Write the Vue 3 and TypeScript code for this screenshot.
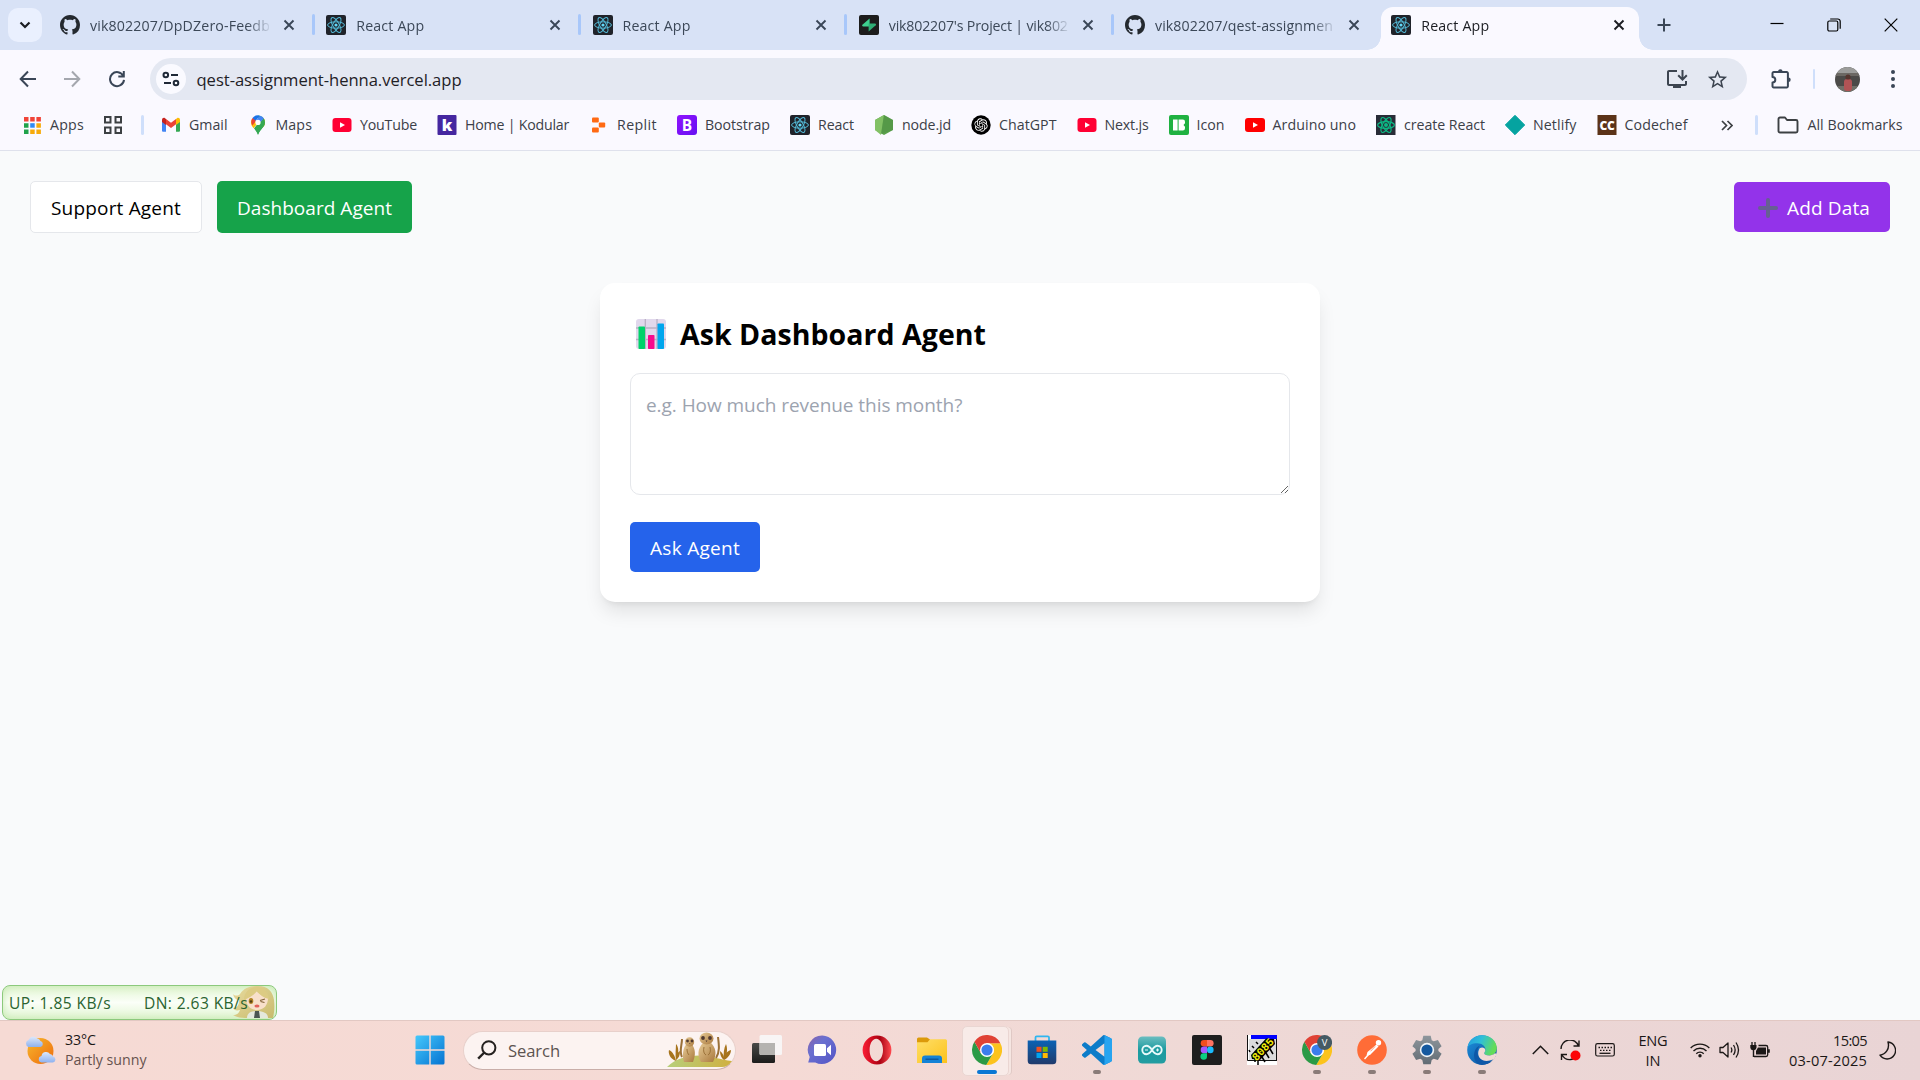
<script setup lang="ts">
import { ref, type Directive } from 'vue'

interface Tab { icon: string; title: string; width: number; active?: boolean }
interface Bookmark { icon: string; label: string; width: number; glyph?: string }
interface App { icon: string; running?: boolean; active?: boolean; glyph?: string }

// Tracks a label out or in so that it occupies the given width.
const vFit: Directive<HTMLElement, number> = {
  mounted(el, { value }) {
    const natural = el.getBoundingClientRect().width
    const count = (el.textContent ?? '').trim().length
    if (count > 0) el.style.letterSpacing = `${(value - natural) / count}px`
  },
}

const tabs: Tab[] = [
  { icon: 'github', title: 'vik802207/DpDZero-Feedb', width: 180 },
  { icon: 'react', title: 'React App', width: 68 },
  { icon: 'react', title: 'React App', width: 68 },
  { icon: 'supabase', title: "vik802207's Project | vik802", width: 179 },
  { icon: 'github', title: 'vik802207/qest-assignmen', width: 178 },
  { icon: 'react', title: 'React App', width: 68, active: true },
]

const bookmarks: Bookmark[] = [
  { icon: 'gmail', label: 'Gmail', width: 38.5 },
  { icon: 'maps', label: 'Maps', width: 36.5 },
  { icon: 'youtube', label: 'YouTube', width: 57 },
  { icon: 'kodular', label: 'Home | Kodular', width: 104, glyph: 'k' },
  { icon: 'replit', label: 'Replit', width: 40 },
  { icon: 'bootstrap', label: 'Bootstrap', width: 65, glyph: 'B' },
  { icon: 'react', label: 'React', width: 36 },
  { icon: 'node', label: 'node.jd', width: 49 },
  { icon: 'chatgpt', label: 'ChatGPT', width: 57.5 },
  { icon: 'youtube', label: 'Next.js', width: 44 },
  { icon: 'icons8', label: 'Icon', width: 28 },
  { icon: 'youtube2', label: 'Arduino uno', width: 83.5 },
  { icon: 'createreact', label: 'create React', width: 81 },
  { icon: 'netlify', label: 'Netlify', width: 43.5 },
  { icon: 'codechef', label: 'Codechef', width: 63, glyph: 'CC' },
]

const apps: App[] = [
  { icon: 'taskview' },
  { icon: 'chat' },
  { icon: 'opera' },
  { icon: 'explorer' },
  { icon: 'chrome', active: true },
  { icon: 'store' },
  { icon: 'vscode', running: true },
  { icon: 'arduino' },
  { icon: 'figma' },
  { icon: 'sim', glyph: '8085' },
  { icon: 'chromev', running: true, glyph: 'V' },
  { icon: 'postman', running: true },
  { icon: 'settings', running: true },
  { icon: 'edge', running: true },
]

const question = ref('')
</script>

<template>
  <div class="screen">
    <svg class="sprite" width="0" height="0" aria-hidden="true">
      <defs>
        <linearGradient id="g-win" x1="0" y1="0" x2="1" y2="1"><stop offset="0" stop-color="#45c8fb" /><stop offset="1" stop-color="#0573d2" /></linearGradient>
        <linearGradient id="g-sun" x1="0" y1="0" x2="1" y2="1"><stop offset="0" stop-color="#f7b92e" /><stop offset="1" stop-color="#ee6a0c" /></linearGradient>
        <linearGradient id="g-cloud" x1="0" y1="0" x2="0" y2="1"><stop offset="0" stop-color="#dbe7fb" /><stop offset="1" stop-color="#8eb2f0" /></linearGradient>
        <linearGradient id="g-chat" x1="0" y1="0" x2="1" y2="1"><stop offset="0" stop-color="#8a62a8" /><stop offset=".35" stop-color="#6a70d0" /><stop offset="1" stop-color="#5454c6" /></linearGradient>
        <linearGradient id="g-opera" x1="0" y1="0" x2="1" y2="0"><stop offset="0" stop-color="#fa1e35" /><stop offset=".45" stop-color="#c00618" /><stop offset=".6" stop-color="#a90313" /><stop offset="1" stop-color="#ff4a50" /></linearGradient>
        <linearGradient id="g-folder" x1="0" y1="0" x2="1" y2="1"><stop offset="0" stop-color="#ffdf68" /><stop offset="1" stop-color="#fcc21b" /></linearGradient>
        <linearGradient id="g-store" x1="0" y1="0" x2="0" y2="1"><stop offset="0" stop-color="#0b62b4" /><stop offset="1" stop-color="#203a6b" /></linearGradient>
        <linearGradient id="g-ard" x1="0" y1="0" x2="0" y2="1"><stop offset="0" stop-color="#6bbdc0" /><stop offset=".5" stop-color="#1b9ba0" /><stop offset="1" stop-color="#239da1" /></linearGradient>
        <linearGradient id="g-edge" x1="0" y1="0" x2="1" y2=".3"><stop offset="0" stop-color="#2299e0" /><stop offset=".5" stop-color="#2fbfd8" /><stop offset="1" stop-color="#63dc58" /></linearGradient>
        <linearGradient id="g-edge2" x1="0" y1="0" x2="1" y2="1"><stop offset="0" stop-color="#1d92e0" /><stop offset="1" stop-color="#0c4a94" /></linearGradient>
        <linearGradient id="g-dark" x1="0" y1="0" x2="0" y2="1"><stop offset="0" stop-color="#4a4a48" /><stop offset="1" stop-color="#1c1c1b" /></linearGradient>
        <linearGradient id="g-boot" x1="0" y1="0" x2="1" y2="1"><stop offset="0" stop-color="#9013fe" /><stop offset="1" stop-color="#6610f2" /></linearGradient>
        <linearGradient id="g-gear" x1="0" y1="0" x2="0" y2="1"><stop offset="0" stop-color="#8e969c" /><stop offset="1" stop-color="#626c74" /></linearGradient>
        <linearGradient id="g-fur" x1="0" y1="0" x2="1" y2="1"><stop offset="0" stop-color="#e8cd98" /><stop offset="1" stop-color="#a9783d" /></linearGradient>
        <linearGradient id="g-hill" x1="0" y1="0" x2="1" y2="0"><stop offset="0" stop-color="#b7cf7c" /><stop offset="1" stop-color="#d0b040" /></linearGradient>
        <linearGradient id="g-hair" x1="0" y1="0" x2="1" y2="1"><stop offset="0" stop-color="#e6d695" /><stop offset="1" stop-color="#c6b462" /></linearGradient>
      </defs>

      <symbol id="i-github" viewBox="0 0 16 16"><path fill="#24292f" d="M8 0C3.58 0 0 3.58 0 8c0 3.54 2.29 6.53 5.47 7.59.4.07.55-.17.55-.38 0-.19-.01-.82-.01-1.49-2.01.37-2.53-.49-2.69-.94-.09-.23-.48-.94-.82-1.13-.28-.15-.68-.52-.01-.53.63-.01 1.08.58 1.23.82.72 1.21 1.87.87 2.33.66.07-.52.28-.87.51-1.07-1.78-.2-3.64-.89-3.64-3.95 0-.87.31-1.59.82-2.15-.08-.2-.36-1.02.08-2.12 0 0 .67-.21 2.2.82.64-.18 1.32-.27 2-.27.68 0 1.36.09 2 .27 1.53-1.04 2.2-.82 2.2-.82.44 1.1.16 1.92.08 2.12.51.56.82 1.27.82 2.15 0 3.07-1.87 3.75-3.65 3.95.29.25.54.73.54 1.48 0 1.07-.01 1.93-.01 2.2 0 .21.15.46.55.38A8.01 8.01 0 0 0 16 8c0-4.42-3.58-8-8-8z" /></symbol>
      <symbol id="i-react" viewBox="0 0 20 20"><rect width="20" height="20" rx="2" fill="#20232a" /><g fill="none" stroke="#53b9d6" stroke-width="1"><ellipse cx="10" cy="10" rx="8.4" ry="3.2" /><ellipse cx="10" cy="10" rx="8.4" ry="3.2" transform="rotate(60 10 10)" /><ellipse cx="10" cy="10" rx="8.4" ry="3.2" transform="rotate(120 10 10)" /></g><circle cx="10" cy="10" r="1.6" fill="#61dafb" /></symbol>
      <symbol id="i-createreact" viewBox="0 0 20 20"><rect width="19.5" height="20" fill="#282c37" /><g fill="none" stroke="#0cb884" stroke-width="1.2"><ellipse cx="10" cy="10" rx="8.4" ry="3.4" /><ellipse cx="10" cy="10" rx="8.4" ry="3.4" transform="rotate(60 10 10)" /><ellipse cx="10" cy="10" rx="8.4" ry="3.4" transform="rotate(120 10 10)" /></g><circle cx="10" cy="10" r="2" fill="#0cb884" /></symbol>
      <symbol id="i-supabase" viewBox="0 0 20 20"><rect width="20" height="20" rx="2" fill="#1c1c1c" /><path d="M10.6 3.4v8H4.2c-1 0-1.4-1-.8-1.7z" fill="#3ecf8e" /><path d="M9.6 16.5v-8h6.3c1 0 1.5 1 .8 1.7z" fill="#2fae76" /></symbol>

      <symbol id="i-gmail" viewBox="0 0 20 20"><path d="M1 5v10.5c0 .8.5 1.3 1.3 1.3H5V8z" fill="#4285f4" /><path d="M19 5v10.5c0 .8-.5 1.3-1.3 1.3H15V8z" fill="#34a853" /><path d="M5 3.9v5.4l5 3.7 5-3.7V3.9l-5 3.8z" fill="#ea4335" /><path d="M1 5v2l4 3V3.9l-1-.7C2.7 2.3 1 3.2 1 5z" fill="#c5221f" /><path d="M19 5v2l-4 3V3.9l1-.7c1.300-.9 3 0 3 1.800z" fill="#fbbc04" /></symbol>
      <symbol id="i-maps" viewBox="0 0 20 20"><path d="M10 .4a7 7 0 0 1 7 7c0 4.600-4.800 6-7 12.400-1-3-2.500-4.700-4-6.600L10.500 8z" fill="#34a853" /><path d="M3.700 4.500 10 7.400l-5.500 4.300C3.300 10.200 3 8.800 3 7.400c0-1 .2-2 .7-2.900z" fill="#fbbc04" /><path d="M4.400 11.500 15.500 3A7 7 0 0 1 17 7.400c0 2-.9 3.500-2.200 5L10 8l-4.500 5.200z" fill="#fbbc04" /><path d="M17 7.400c0 4.600-4.800 6-7 12.400-.9-2.700-2.200-4.400-3.500-6L15.500 3.200A7 7 0 0 1 17 7.400z" fill="#34a853" /><path d="M4.500 3.100A7 7 0 0 1 12 .7L6.300 7.200z" fill="#1a73e8" /><path d="M12 .7a7 7 0 0 1 3.900 2.900L12.500 7 8 5.200z" fill="#4285f4" /><path d="M4.500 3.100 8 6 4.300 10.500A7 7 0 0 1 4.500 3.100z" fill="#ea4335" /><circle cx="10" cy="7.400" r="2.600" fill="#fff" /></symbol>
      <symbol id="i-youtube" viewBox="0 0 20 20"><rect x=".5" y="3" width="19" height="14" rx="3" fill="#ff0033" /><path d="M8 7.200v5.600l5-2.800z" fill="#fff" /></symbol>
      <symbol id="i-youtube2" viewBox="0 0 20 20"><rect y="3" width="20" height="14" rx="3" fill="#ff0000" /><path d="M8 7.200v5.600l5-2.800z" fill="#fff" /></symbol>
      <symbol id="i-kodular" viewBox="0 0 20 20"><rect x=".5" width="19" height="20" rx="1" fill="#4527a0" /></symbol>
      <symbol id="i-replit" viewBox="0 0 20 20"><g fill="#ff6a13"><rect x="3" y="2.500" width="6.800" height="5" rx="1" /><rect x="9.800" y="7.500" width="6.400" height="5" rx="1" /><rect x="3" y="12.500" width="6.800" height="5" rx="1" /></g></symbol>
      <symbol id="i-bootstrap" viewBox="0 0 20 20"><rect width="20" height="20" rx="3" fill="url(#g-boot)" /></symbol>
      <symbol id="i-node" viewBox="0 0 20 20"><path d="M10 0l9 5v10l-9 5-9-5V5z" fill="#5ba24b" /><path d="M10 0 7 20 1 15V5z" fill="#82c165" /><path d="M10 0l9 5v10l-12 4z" fill="#4f8f45" opacity=".5" /></symbol>
      <symbol id="i-chatgpt" viewBox="0 0 20 20"><circle cx="10" cy="10" r="9.700" fill="#000" /><path transform="translate(3.300 3.300) scale(.56)" fill="#fff" d="M22.2819 9.8211a5.9847 5.9847 0 0 0-.5157-4.9108 6.0462 6.0462 0 0 0-6.5098-2.9A6.0651 6.0651 0 0 0 4.9807 4.1818a5.9847 5.9847 0 0 0-3.9977 2.9 6.0462 6.0462 0 0 0 .7427 7.0966 5.98 5.98 0 0 0 .511 4.9107 6.051 6.051 0 0 0 6.5146 2.9001A5.9847 5.9847 0 0 0 13.2599 24a6.0557 6.0557 0 0 0 5.7718-4.2058 5.9894 5.9894 0 0 0 3.9977-2.9001 6.0557 6.0557 0 0 0-.7475-7.0729zm-9.022 12.6081a4.4755 4.4755 0 0 1-2.8764-1.0408l.1419-.0804 4.7783-2.7582a.7948.7948 0 0 0 .3927-.6813v-6.7369l2.02 1.1686a.071.071 0 0 1 .038.052v5.5826a4.504 4.504 0 0 1-4.4945 4.4944zm-9.6607-4.1254a4.4708 4.4708 0 0 1-.5346-3.0137l.142.0852 4.783 2.7582a.7712.7712 0 0 0 .7806 0l5.8428-3.3685v2.3324a.0804.0804 0 0 1-.0332.0615L9.74 19.9502a4.4992 4.4992 0 0 1-6.1408-1.6464zM2.3408 7.8956a4.485 4.485 0 0 1 2.3655-1.9728V11.6a.7664.7664 0 0 0 .3879.6765l5.8144 3.3543-2.0201 1.1685a.0757.0757 0 0 1-.071 0l-4.8303-2.7865A4.504 4.504 0 0 1 2.3408 7.872zm16.5963 3.8558L13.1038 8.364 15.1192 7.2a.0757.0757 0 0 1 .071 0l4.8303 2.7913a4.4944 4.4944 0 0 1-.6765 8.1042v-5.6772a.79.79 0 0 0-.407-.667zm2.0107-3.0231l-.142-.0852-4.7735-2.7818a.7759.7759 0 0 0-.7854 0L9.409 9.2297V6.8974a.0662.0662 0 0 1 .0284-.0615l4.8303-2.7866a4.4992 4.4992 0 0 1 6.6802 4.66zM8.3065 12.863l-2.02-1.1638a.0804.0804 0 0 1-.038-.0567V6.0742a4.4992 4.4992 0 0 1 7.3757-3.4537l-.142.0805L8.704 5.459a.7948.7948 0 0 0-.3927.6813zm1.0976-2.3654l2.602-1.4998 2.6069 1.4998v2.9994l-2.5974 1.4997-2.6067-1.4997Z" /></symbol>
      <symbol id="i-icons8" viewBox="0 0 20 20"><rect width="20" height="20" rx="2" fill="#1fb141" /><rect x="4" y="4.500" width="4.600" height="11" fill="#fff" /><path d="M9.600 4.500h4.200a2.200 2.200 0 0 1 2.200 2.200v1.600L14.500 10l1.500 1.700v1.600a2.200 2.200 0 0 1-2.200 2.200H9.600z" fill="#fff" /></symbol>
      <symbol id="i-netlify" viewBox="0 0 20 20"><path d="M10 .300 19.700 10 10 19.700.3 10z" fill="#05a3a0" stroke="#05a3a0" stroke-linejoin="round" /></symbol>
      <symbol id="i-codechef" viewBox="0 0 20 20"><rect x=".5" width="19" height="20" fill="#5b3318" /></symbol>

      <symbol id="i-taskview" viewBox="0 0 30 30"><rect x="0" y="8" width="23" height="20" rx="1.500" fill="url(#g-dark)" /><rect x="7.500" y="0" width="22.500" height="20" rx="1.500" fill="#f7f7f7" opacity=".92" /><path d="M7.500 8H23v12H9a1.500 1.500 0 0 1-1.500-1.500z" fill="#b5b3b0" /></symbol>
      <symbol id="i-chat" viewBox="0 0 30 30"><path d="M15.300.5a14.300 14.300 0 1 1-7 27H1.200l1.500-5.600A14.300 14.300 0 0 1 15.300.5z" fill="url(#g-chat)" /><rect x="7" y="9" width="12" height="12" rx="1.500" fill="#fff" /><path d="M20 13.200l4-3.400v10.400l-4-3.400z" fill="#fff" /></symbol>
      <symbol id="i-opera" viewBox="0 0 30 30"><path fill-rule="evenodd" fill="url(#g-opera)" d="M15 .6a14.400 14.400 0 1 0 0 28.800 14.400 14.400 0 0 0 0-28.800zM14.200 3.800c3.900 0 6.800 5 6.800 11.200s-2.900 11.200-6.800 11.200S7.600 21.200 7.600 15s2.700-11.200 6.600-11.200z" /></symbol>
      <symbol id="i-explorer" viewBox="0 0 30 30"><path d="M0 4a1.500 1.500 0 0 1 1.500-1.500H10L13 4.600V10H0z" fill="#dc9a0a" /><path d="M0 7.200h10.500L13 4.200h15.500A1.500 1.500 0 0 1 30 5.700V28H0z" fill="url(#g-folder)" /><path d="M5 28v-4.500a3 3 0 0 1 3-3h14a3 3 0 0 1 3 3V28z" fill="#1482d6" /><path d="M8.500 24.200h13" stroke="#0a4f94" stroke-width="1.200" /></symbol>
      <symbol id="i-chrome" viewBox="2 2 44 44"><path d="M24 14H43.600A22 22 0 0 1 22.860 45.970L32.660 29A10 10 0 0 0 24 14Z" fill="#fcc31c" /><path d="M32.660 29 22.860 45.970A22 22 0 0 1 5.540 12.030L15.340 29Z" fill="#2b9a46" /><path d="M5.540 12.030A22 22 0 0 1 43.600 14H24L15.340 29Z" fill="#e04235" /><circle cx="24" cy="24" r="10.300" fill="#fff" /><circle cx="24" cy="24" r="8.200" fill="#3b7ded" /></symbol>
      <symbol id="i-chromev" viewBox="0 0 30 30"><svg width="30" height="30" viewBox="2 2 44 44"><path d="M24 14H43.600A22 22 0 0 1 22.860 45.970L32.660 29A10 10 0 0 0 24 14Z" fill="#fcc31c" /><path d="M32.660 29 22.860 45.970A22 22 0 0 1 5.540 12.030L15.340 29Z" fill="#2b9a46" /><path d="M5.540 12.030A22 22 0 0 1 43.600 14H24L15.340 29Z" fill="#e04235" /><circle cx="24" cy="24" r="10.300" fill="#fff" /><circle cx="24" cy="24" r="8.200" fill="#3b7ded" /></svg><circle cx="22.600" cy="7.500" r="7.500" fill="#455a64" /></symbol>
      <symbol id="i-store" viewBox="0 0 30 30"><path d="M8.500 6V2.500A1.200 1.200 0 0 1 9.700 1.300h11.100A1.200 1.200 0 0 1 22 2.500V6" fill="none" stroke="#30b6f0" stroke-width="1.800" /><path d="M.7 5.500h28.600v20.300a3.500 3.500 0 0 1-3.500 3.500H4.200a3.500 3.500 0 0 1-3.500-3.500z" fill="url(#g-store)" /><path fill="#f2501f" d="M9.500 11.800h5v5h-5z" /><path fill="#80ba01" d="M15.700 11.800h5v5h-5z" /><path fill="#02a4ef" d="M9.500 18h5v5h-5z" /><path fill="#ffb902" d="M15.700 18h5v5h-5z" /></symbol>
      <symbol id="i-vscode" viewBox="0 0 24 24"><path fill="#0c7cc9" d="M23.150 2.587L18.210.210a1.494 1.494 0 0 0-1.705.290l-9.460 8.630-4.120-3.128a.999.999 0 0 0-1.276.057L.327 7.261A1 1 0 0 0 .326 8.740L3.899 12 .326 15.260a1 1 0 0 0 .001 1.479L1.650 17.940a.999.999 0 0 0 1.276.057l4.120-3.128 9.460 8.630a1.492 1.492 0 0 0 1.704.290l4.942-2.377A1.500 1.500 0 0 0 24 20.060V3.939a1.500 1.500 0 0 0-.850-1.352zm-5.146 14.861L10.826 12l7.178-5.448v10.896z" /><path d="M18 .15l5.150 2.437A1.500 1.500 0 0 1 24 3.940v16.120a1.500 1.500 0 0 1-.85 1.350L18.200 23.800a1.500 1.500 0 0 1-1.700-.3c.6.300 1.500 0 1.500-.9z" fill="#27a4f0" /></symbol>
      <symbol id="i-arduino" viewBox="0 0 30 30"><rect x="1" y="1.500" width="28" height="27" rx="4.500" fill="url(#g-ard)" /><g fill="none" stroke="#e8fafa" stroke-width="1.900"><path d="M15 15c-2-3-3.500-4.200-5.500-4.200a4.200 4.200 0 0 0 0 8.400c2 0 3.500-1.200 5.500-4.200s3.500-4.200 5.500-4.200a4.200 4.200 0 0 1 0 8.400c-2 0-3.500-1.200-5.500-4.200z" /><path d="M8 15h3M19 15h3M20.500 13.500v3" stroke-width="1.100" /></g></symbol>
      <symbol id="i-figma" viewBox="0 0 30 30"><rect width="30" height="30" rx="2" fill="#1e1e1e" /><path d="M15 5h-3a3.300 3.300 0 0 0 0 6.600h3z" fill="#f24e1e" /><path d="M15 5h3.300a3.300 3.300 0 0 1 0 6.600H15z" fill="#ff7262" /><path d="M15 11.600h-3a3.300 3.300 0 0 0 0 6.600h3z" fill="#a259ff" /><circle cx="18.300" cy="14.900" r="3.300" fill="#1abcfe" /><path d="M12 18.200h3v3.300a3.300 3.300 0 1 1-3-3.300z" fill="#0acf83" /></symbol>
      <symbol id="i-sim" viewBox="0 0 30 30"><rect width="30" height="30" fill="#fff" /><path d="M2 4h28v21H2z" fill="#dcdcdc" /><path d="M.5 0v25.500H30M29.500 0v26" stroke="#111" fill="none" /><path d="M4 0h26v4H4z" fill="#00f" /><path d="M4 20 19 3.500l8 .5 1 5-15 16-8-1z" fill="#000" /><path d="M8 23v4M11 24v6M15 22l3 5M19 18l3 5M23 14l3 5M3 17l-1-2M7 13l-2-2M11 9 9 7" stroke="#000" stroke-width="1.500" /></symbol>
      <symbol id="i-postman" viewBox="0 0 30 30"><circle cx="15" cy="15" r="14.800" fill="#ff6c37" /><circle cx="21.500" cy="7.800" r="2.700" fill="#fff" /><path d="M19.500 9.500 21.500 11.500 13 20 9.500 20.500 10.500 17z" fill="#fff" /><path d="M12 19 7.500 24" stroke="#fff" stroke-width="1.400" /><path d="M18 11.500l-4.500 4.800" stroke="#ff6c37" stroke-width=".7" /></symbol>
      <symbol id="i-settings" viewBox="0 0 30 30"><path fill="url(#g-gear)" d="M11.300.8h7.400l1 4.400 2 1.100 4.200-1.300 3.700 6.300-3.200 2.700v2l3.200 2.800-3.700 6.300-4.200-1.400-2 1.200-1 4.400h-7.400l-1-4.400-2-1.200-4.200 1.400L.4 18.800 3.600 16v-2L.4 11.300 4.100 5l4.200 1.300 2-1.100z" /><circle cx="15" cy="15" r="7.200" fill="#f2f6f9" /><circle cx="15" cy="15" r="5.600" fill="#14599f" /></symbol>
      <symbol id="i-edge" viewBox="0 0 30 30"><circle cx="15" cy="15" r="14.800" fill="url(#g-edge2)" /><path d="M.4 13C1.500 5.300 7.500.2 15 .2c8.600 0 14.800 6 14.800 12.800 0 4.500-3.300 7.400-7.500 7.400-3.600 0-5.100-1.300-5.100-2.200 0-.7 1.200-1.300 1.200-3.600 0-3.500-3.400-6.400-8.200-6.400C5 8.200 1 10.300.4 13z" fill="url(#g-edge)" /><path d="M18.300 15c0 2-1.100 2.500-1.100 3.200 0 .9 1.500 2.200 5.100 2.200 2.200 0 4.200-.8 5.600-2.200l1.700.5c-.8 3-2.500 5.600-4.800 7.500-3 .9-6.500.9-9.500-.8-4.300-2.400-5.300-8-2.600-12.200 2-1.500 5.600-.9 5.600 1.800z" fill="#f0dad5" /><path d="M13 10.500c-3 3-3.500 8.500-.5 12.500 3.500 4 9.500 3.500 13.500 1.300-2.700 3.900-7.300 5.600-11 5.600C8 29.800 6 22 7.500 17c.8-3.500 3-5.500 5.500-6.500z" fill="#0e58a8" /></symbol>
    </svg>

    <header class="browser">
      <div class="tabstrip">
        <button class="tab-search"><svg width="12" height="8" viewBox="0 0 12 8"><path d="M1.500 1.500 6 6l4.500-4.500" fill="none" stroke="#1b1d22" stroke-width="2.200" /></svg></button>
        <div v-for="(tab, i) in tabs" :key="i" class="tab" :class="{ active: tab.active, last: i === 4 }">
          <svg class="fav"><use :href="`#i-${tab.icon}`" /></svg>
          <div class="tab-title"><span v-fit="tab.width">{{ tab.title }}</span></div>
          <svg class="close" width="12" height="12" viewBox="0 0 12 12"><path d="M1.500 1.500l9 9M10.500 1.500l-9 9" :stroke="tab.active ? '#1b1d22' : '#3a4657'" stroke-width="1.900" /></svg>
        </div>
        <svg class="newtab" width="14" height="14" viewBox="0 0 14 14"><path d="M7 .5v13M.5 7h13" stroke="#3a4657" stroke-width="2" /></svg>
        <div class="winctl">
          <svg width="14" height="14" viewBox="0 0 14 14"><path d="M.5 5.500h13" stroke="#000" stroke-width="1.200" /></svg>
          <svg width="14" height="14" viewBox="0 0 14 14" fill="none" stroke="#000" stroke-width="1.200"><rect x=".8" y="3" width="10" height="10" rx="1.500" /><path d="M3.200 1h7.600a2.400 2.400 0 0 1 2.400 2.400v7.400" /></svg>
          <svg width="14" height="14" viewBox="0 0 14 14"><path d="M.7.7l12.600 12.600M13.300.7.7 13.300" stroke="#000" stroke-width="1.200" /></svg>
        </div>
      </div>

      <div class="toolbar">
        <svg class="nav" width="18" height="18" viewBox="0 0 18 18"><path d="M17 9H2M9 1.500 1.700 9 9 16.500" fill="none" stroke="#3a4657" stroke-width="2" /></svg>
        <svg class="nav fwd" width="18" height="18" viewBox="0 0 18 18"><path d="M1 9h15M9 1.500 16.300 9 9 16.500" fill="none" stroke="#a4a7ae" stroke-width="2" /></svg>
        <svg class="nav rel" width="18" height="18" viewBox="0 0 18 18"><path d="M15.300 6A7 7 0 1 0 16 9.800M15.800 1v5.500h-5.500" fill="none" stroke="#3a4657" stroke-width="2" /></svg>
        <div class="omnibox">
          <span class="siteinfo"><svg width="18" height="16" viewBox="0 0 18 16" fill="none" stroke="#1f2937" stroke-width="2"><circle cx="3.800" cy="4" r="2.300" /><path d="M9 4h7M2 12h7" /><circle cx="14" cy="12" r="2.300" /></svg></span>
          <span class="url"><span v-fit="265">qest-assignment-henna.vercel.app</span></span>
          <svg class="install" width="24" height="24" viewBox="0 0 24 24" fill="#3c4450"><path d="M20 17H4V5h8V3H4c-1.100 0-2 .900-2 2v12c0 1.100.9 2 2 2h4v2h8v-2h4c1.100 0 2-.900 2-2v-3h-2v3z" /><path d="M17.500 14l5-5-1.410-1.410-2.590 2.580V3h-2v7.170l-2.590-2.580L12.500 9l5 5z" /></svg>
          <svg class="star" width="23" height="23" viewBox="0 0 24 24" fill="#3c4450"><path d="M22 9.240l-7.190-.620L12 2 9.190 8.630 2 9.240l5.460 4.730L5.820 21 12 17.270 18.180 21l-1.630-7.030L22 9.240zM12 15.400l-3.760 2.270 1-4.280-3.320-2.880 4.380-.380L12 6.100l1.710 4.040 4.380.380-3.320 2.880 1 4.280L12 15.400z" /></svg>
        </div>
        <svg class="ext" width="22" height="22" viewBox="0 0 22 22"><path d="M2.500 5.200a1.200 1.200 0 0 1 1.200-1.200h13a1.200 1.200 0 0 1 1.200 1.200v13a1.200 1.200 0 0 1-1.200 1.200h-13a1.200 1.200 0 0 1-1.200-1.200v-3.700a2.800 2.800 0 0 0 0-5.600z" fill="none" stroke="#3a4657" stroke-width="2" stroke-linejoin="round" /><path d="M8 3.500a2.300 2.300 0 0 1 4.600 0zM18.400 9.500a2.300 2.300 0 0 1 0 4.600z" fill="#3a4657" /></svg>
        <i class="vsep"></i>
        <svg class="avatar" width="25" height="25" viewBox="0 0 25 25"><clipPath id="c-av"><circle cx="12.500" cy="12.500" r="12.500" /></clipPath><g clip-path="url(#c-av)"><rect width="25" height="25" fill="#4b4a48" /><rect width="25" height="6" fill="#9b9c9a" /><path d="M0 6h25v3H0z" fill="#6b6863" /><path d="M0 19h25v6H0z" fill="#6f7069" /><rect x="9" y="12" width="8" height="12" rx="3" fill="#b05355" /><circle cx="13" cy="10" r="2.600" fill="#54352e" /></g></svg>
        <svg class="kebab" width="4" height="18" viewBox="0 0 4 18" fill="#3a4657"><circle cx="2" cy="2" r="2" /><circle cx="2" cy="9" r="2" /><circle cx="2" cy="16" r="2" /></svg>
      </div>

      <div class="bookmarks">
        <svg class="bm-apps" width="17" height="17" viewBox="0 0 17 17"><path fill="#f04438" d="M0 0h4.500v4.500H0zM6.200 0h4.500v4.500H6.200zM12.400 0h4.500v4.500h-4.500z" /><path fill="#1fa24a" d="M0 6.200h4.500v4.500H0zM0 12.400h4.500v4.500H0z" /><path fill="#2f8af5" d="M6.200 6.200h4.500v4.500H6.200z" /><path fill="#f7ab0a" d="M12.400 6.200h4.500v4.500h-4.500zM6.200 12.400h4.500v4.500H6.200zM12.400 12.400h4.500v4.500h-4.500z" /></svg>
        <span class="bm-appslabel" v-fit="34">Apps</span>
        <svg class="bm-grid" width="18" height="18" viewBox="0 0 18 18" fill="none" stroke="#3c4043" stroke-width="2"><path d="M1 1h5.500v5.500H1zM11.500 1H17v5.500h-5.500zM1 11.500h5.500V17H1zM11.500 11.500H17V17h-5.500z" /></svg>
        <i class="vsep bsep"></i>
        <div v-for="b in bookmarks" :key="b.label" class="bm">
          <svg class="fav" viewBox="0 0 20 20"><use :href="`#i-${b.icon}`" /><text v-if="b.glyph" class="glyph" :class="b.icon" x="10" y="15.500">{{ b.glyph }}</text></svg>
          <span v-fit="b.width">{{ b.label }}</span>
        </div>
        <svg class="more" width="12" height="11" viewBox="0 0 12 11"><path d="M1 1l4.500 4.500L1 10M6.500 1 11 5.500 6.500 10" fill="none" stroke="#3c4043" stroke-width="1.700" /></svg>
        <i class="vsep msep"></i>
        <svg class="folder" width="22" height="18" viewBox="0 0 22 18"><path d="M1.500 3a1.500 1.500 0 0 1 1.500-1.500h5l2 2.500h9A1.500 1.500 0 0 1 20.500 5.500V15a1.500 1.500 0 0 1-1.500 1.500H3A1.500 1.500 0 0 1 1.500 15z" fill="none" stroke="#3c4043" stroke-width="1.900" stroke-linejoin="round" /></svg>
        <span v-fit="95">All Bookmarks</span>
      </div>
    </header>

    <main class="page">
      <nav class="agents">
        <button class="btn outline"><span v-fit="130">Support Agent</span></button>
        <button class="btn green"><span v-fit="155">Dashboard Agent</span></button>
        <button class="btn purple">
          <svg width="20" height="20" viewBox="0 0 20 20"><path d="M10 2v16M2 10h16" stroke="#675f93" stroke-width="4" stroke-linecap="round" /></svg>
          <span v-fit="83">Add Data</span>
        </button>
      </nav>
      <section class="card">
        <h2>
          <svg width="30" height="30" viewBox="0 0 30 30"><rect width="30" height="30" rx="3" fill="#e1d8ec" /><path d="M9.300 0v30M21 0v30M0 9h30M0 20.500h30" stroke="#b8b0c4" stroke-width="1.300" /><rect x="2.500" y="7.500" width="6.500" height="22.500" rx=".8" fill="#00d26a" /><rect x="12" y="16" width="6.500" height="14" rx=".8" fill="#f70a8d" /><rect x="21.500" y="4.500" width="6.500" height="25.500" rx=".8" fill="#00a6ed" /></svg>
          <span v-fit="306">Ask Dashboard Agent</span>
        </h2>
        <textarea v-model="question" placeholder="e.g. How much revenue this month?"></textarea>
        <button class="btn blue"><span v-fit="90">Ask Agent</span></button>
      </section>
      <div class="netmeter">
        <span class="up" v-fit="102">UP: 1.85 KB/s</span>
        <span class="dn" v-fit="104">DN: 2.63 KB/s</span>
        <svg class="mascot" width="44" height="32" viewBox="0 0 44 32"><path d="M13 32c-5 0-9-1-12-3 4 0 6-2 7-5-4 1-6 0-7-2 5 0 6-4 6-8-3 0-5-2-6-6 2 2 5 2 7 0C12 2 18 0 26 0c10 0 15 6 16 14 1 8 0 13-1 18z" fill="url(#g-hair)" opacity=".9" /><path d="M14 12c3-2 7-4 10-7 4 4 9 6 12 7 0 7-4 12-11 12s-11-5-11-12z" fill="#f8e0cb" /><path d="M12 14c0-8 6-13 13-13 6 0 11 4 12 12-5-1-9-4-12-8-3 4-8 7-13 9z" fill="#dccb83" /><ellipse cx="19" cy="15" rx="2.300" ry="2.900" fill="#b08325" /><circle cx="19" cy="15.500" r="1.200" fill="#533e16" /><path d="M28 14.500l5-1.500M28.500 15.500l4 1" stroke="#805f35" stroke-width="1.200" /><ellipse cx="25" cy="20" rx="2.500" ry="1.600" fill="#e2615c" /><path d="M15 32c0-5 4-7 10-7s11 2 11 7z" fill="#e4e8dc" /><path d="M23 25h4l1 7h-6z" fill="#4b5550" /></svg>
      </div>
    </main>

    <footer class="taskbar">
      <div class="weather">
        <svg width="31" height="29" viewBox="0 0 31 29"><circle cx="15.500" cy="15" r="13" fill="url(#g-sun)" /><path d="M3.500 11A3.700 3.700 0 0 1 3.500 4 5 5 0 0 1 12 2.600 4 4 0 0 1 15.500 5a3.100 3.100 0 0 1 0 6z" fill="url(#g-cloud)" /><path d="M16.500 26.500a3.300 3.300 0 0 1 0-6.500 4.700 4.700 0 0 1 8.500-2 3.600 3.600 0 0 1 3 2.600 3 3 0 0 1 0 5.900z" fill="url(#g-cloud)" /></svg>
        <div class="wtext"><span class="deg" v-fit="31">33°C</span><span class="cond" v-fit="81.5">Partly sunny</span></div>
      </div>
      <svg class="start" width="30" height="30" viewBox="0 0 30 30" fill="url(#g-win)"><path d="M2 .500h12.300v13.800H.5V2A1.500 1.500 0 0 1 2 .5zM15.700.5H28A1.500 1.500 0 0 1 29.500 2v12.300H15.700zM.5 15.700h13.800v13.800H2A1.500 1.500 0 0 1 .5 28zM15.700 15.700h13.800V28a1.500 1.500 0 0 1-1.500 1.500H15.700z" /></svg>
      <div class="search">
        <svg width="20" height="20" viewBox="0 0 20 20"><circle cx="11.800" cy="7.800" r="6.600" fill="none" stroke="#25211f" stroke-width="2" /><path d="M7.300 12.500 1.200 18.600" stroke="#25211f" stroke-width="2.400" /></svg>
        <span v-fit="52">Search</span>
        <svg class="meerkats" width="66" height="36" viewBox="0 0 66 36"><path d="M0 35C8 27 20 23.500 32 23.500S54 28 65 29c-3 4-6 6-10 6z" fill="url(#g-hill)" /><g fill="#a7741d"><path d="M9 29C3 27 1 21 2 18c4 2 6 6 7 11zM9 29c-1-7 0-13 0-17 3 3 3 10 0 17zM9 28c0-5 2-8 4-9 0 4-1 7-4 9z" /><path d="M57 28c-3-2-4-6-4-9 3 2 4 5 4 9zM57 28c-1-6 0-12 2-16 2 5 1 11-2 16zM57 28c1-6 3-9 7-10 0 4-3 8-7 10z" /></g><path d="M15 25c-3-6 0-12 0-18M49 26c4-6 3-13 2-21" fill="none" stroke="#9b7138" stroke-width="2" /><path d="M18 14c2-3 7-3 8 0 3 5 2 11 0 16h-9c-2-6-1-12 1-16z" fill="url(#g-fur)" /><circle cx="22.500" cy="10" r="4.700" fill="url(#g-fur)" /><path d="M35 12c2-3 8-3 10 0 5 6 4 12 1 18H34c-4-7-3-13 1-18z" fill="url(#g-fur)" /><ellipse cx="39.500" cy="6.500" rx="7" ry="6" fill="url(#g-fur)" /><g fill="#513a31"><circle cx="20.500" cy="9" r="1.400" /><circle cx="25" cy="9" r="1.400" /><circle cx="36" cy="6" r="1.900" /><circle cx="43" cy="6" r="1.900" /><path d="M38.500 8.500h2l-1 1.500zM22 11h1.500l-.7 1z" /></g><path d="M37 15c-1 4 0 7 2 8M43 15c1 4 0 7-2 8M20 17c0 3 1 5 2 6" stroke="#9b7138" fill="none" /></svg>
      </div>
      <div class="apps">
        <div v-for="a in apps" :key="a.icon" class="slot" :class="[a.icon, { active: a.active, running: a.running }]">
          <svg class="appicon" viewBox="0 0 30 30">
            <use :href="`#i-${a.icon}`" />
            <text v-if="a.icon === 'sim'" class="glyph sim" x="15.500" y="18" transform="rotate(-47 15.500 14)">{{ a.glyph }}</text>
            <text v-else-if="a.glyph" class="glyph v" x="22.600" y="11">{{ a.glyph }}</text>
          </svg>
        </div>
      </div>
      <div class="tray">
        <svg width="17" height="10" viewBox="0 0 17 10"><path d="M.8 9 8.500 1.200 16.200 9" fill="none" stroke="#1b1716" stroke-width="1.500" /></svg>
        <svg class="sync" width="21" height="21" viewBox="0 0 21 21" fill="none" stroke="#1b1716" stroke-width="1.400"><path d="M1 9A9 9 0 0 1 18.500 6M19 .5V6h-5.500M18.500 13A9 9 0 0 1 2 15M1.500 20v-5.500H7" /><circle cx="15.500" cy="15.500" r="5" fill="#fb0408" stroke="none" /></svg>
        <svg class="kbd" width="20" height="14" viewBox="0 0 20 14"><rect x=".7" y=".7" width="18.600" height="12.300" rx="1.800" fill="none" stroke="#1b1716" stroke-width="1.200" /><path d="M3.500 4.500h1.500M6.500 4.500H8M9.500 4.500H11M12.500 4.500H14M15.500 4.500H17M5 7.300h1.500M8 7.300h1.500M11 7.300h1.500M14 7.300h1.500" stroke="#1b1716" stroke-width="1.300" /><path d="M4.500 10.300h11" stroke="#1b1716" stroke-width="1.300" /></svg>
        <div class="lang"><span v-fit="29">ENG</span><span v-fit="15">IN</span></div>
        <svg class="wifi" width="20" height="16" viewBox="0 0 20 16" fill="none" stroke="#1b1716" stroke-width="1.400"><path d="M.7 6a13 13 0 0 1 18.600 0M3.500 8.900a9.200 9.200 0 0 1 13 0M6.300 11.700a5.200 5.200 0 0 1 7.400 0" /><circle cx="10" cy="13.800" r="1.700" fill="#1b1716" stroke="none" /></svg>
        <svg class="vol" width="21" height="18" viewBox="0 0 21 18" fill="none" stroke="#1b1716" stroke-width="1.300"><path d="M1 6.500h3L9 2v14l-5-4.500H1z" stroke-linejoin="round" /><path d="M12 6.500q1.700 2.500 0 5M14.500 4q3.300 5 0 10M17 1.500q5 7.500 0 15" /></svg>
        <svg class="bat" width="20" height="16" viewBox="0 0 20 16"><path d="M2 0v3M5 0v3" stroke="#1b1716" stroke-width="1.300" /><path d="M.3 3h6.200v2.500A3 3 0 0 1 4.200 8.300V15H2.800V8.300A3 3 0 0 1 .3 5.500z" fill="#1b1716" /><path d="M8.500 3.500H16A1.700 1.700 0 0 1 17.700 5.200v7.600A1.700 1.700 0 0 1 16 14.500H4" fill="none" stroke="#1b1716" stroke-width="1.300" /><path d="M8 5.500h8v7H6V9z" fill="#1b1716" /><path d="M18 7.200h1.800v3.600H18z" fill="#1b1716" /></svg>
        <div class="clock"><span v-fit="34">15:05</span><span v-fit="78">03-07-2025</span></div>
        <svg class="moon" width="17" height="19" viewBox="0 0 17 19"><path d="M9 1a8.500 8.500 0 1 1-8 13.200C6.500 13.500 11 8 9 1z" fill="none" stroke="#1b1716" stroke-width="1.400" stroke-linejoin="round" /></svg>
      </div>
    </footer>
  </div>
</template>

<style>
html, body { margin: 0; overflow: hidden; }
</style>

<style scoped>
.screen { width: 1920px; height: 1080px; display: flex; flex-direction: column; overflow: hidden; font-family: 'Open Sans', 'Noto Sans', sans-serif; font-size: 14px; color: #3c4043; }
.screen * { box-sizing: border-box; }
.screen svg { display: block; flex: none; }
.sprite { position: absolute; }
.screen span { white-space: nowrap; flex: none; }
button { border: 0; padding: 0; font: inherit; }
.fav { width: 20px; height: 20px; }
.glyph { fill: #fff; text-anchor: middle; font-family: 'Open Sans', sans-serif; }
.glyph.kodular { font-size: 16px; font-weight: 800; }
.glyph.bootstrap { font-size: 15.5px; font-weight: 700; }
.glyph.codechef { font-size: 12px; font-weight: 800; transform: translateY(-1px); letter-spacing: -.3px; }
.glyph.v { font-size: 9.5px; }
.glyph.sim { font-family: 'Liberation Mono', monospace; font-size: 11px; font-weight: 700; fill: #f3ee0c; }

.browser { height: 151px; flex: none; background: #faf9ff; border-bottom: 1px solid #dfe1ec; }
.tabstrip { height: 50px; background: #d8e2f6; display: flex; align-items: center; }
.tab-search { width: 34px; height: 34px; margin-left: 8px; border-radius: 10px; background: #eaf0fe; display: flex; align-items: center; justify-content: center; margin-right: 5.5px; }
.tab { width: 266.25px; height: 50px; padding: 0 19px 0 12.5px; display: flex; align-items: center; position: relative; color: #3c4858; font-size: 14.2px; }
.tab:not(.active):not(.last)::after { content: ''; position: absolute; right: -1px; top: 14px; width: 3px; height: 21px; border-radius: 2px; background: #a8c7fa; }
.tab-title { flex: 1; min-width: 0; margin: 0 14px 0 10px; overflow: hidden; line-height: 22px; padding-top: 1px; mask-image: linear-gradient(90deg, #000 157px, transparent 182px); }
.tab-title span { display: inline-block; }
.tab.active { width: 258px; height: 43px; margin: 7px 0 0 2.5px; padding: 0 14px 7px 10px; border-radius: 12px 12px 0 0; background: #faf9ff; color: #1b1d22; }
.tab.active::before, .tab.active::after { content: ''; position: absolute; bottom: 0; width: 14px; height: 14px; }
.tab.active::before { left: -14px; background: radial-gradient(circle at 0 0, transparent 13.5px, #faf9ff 14px); }
.tab.active::after { right: -14px; background: radial-gradient(circle at 100% 0, transparent 13.5px, #faf9ff 14px); }
.newtab { margin-left: 17.5px; }
.winctl { margin-left: auto; margin-right: 22px; display: flex; gap: 43px; }

.toolbar { height: 58px; display: flex; align-items: center; background: #faf9ff; }
.nav { margin-left: 19px; }
.nav.fwd { margin-left: 26px; }
.nav.rel { margin-left: 27px; }
.omnibox { margin-left: 24px; width: 1597px; height: 42px; border-radius: 21px; background: #e4e8f2; display: flex; align-items: center; padding: 0 18px 0 6px; color: #1f2126; font-size: 16.6px; }
.siteinfo { width: 30px; height: 30px; border-radius: 50%; background: #fafaff; display: flex; align-items: center; justify-content: center; }
.url { margin-left: 10.5px; line-height: 24px; padding-top: 1px; }
.url span { display: inline-block; }
.install { margin-left: auto; }
.star { margin-left: 17px; }
.ext { margin-left: 23px; }
.vsep { width: 3px; height: 20px; border-radius: 2px; background: #cfdffb; flex: none; }
.toolbar .vsep { width: 2px; margin-left: 21px; }
.avatar { margin-left: 20px; }
.kebab { margin-left: 31px; }

.bookmarks { height: 34px; display: flex; align-items: center; font-size: 14.2px; color: #3c4048; line-height: 20px; }
.bm-apps { margin-left: 24px; }
.bm-appslabel { margin-left: 9px; margin-right: 20px; }
.bsep { margin: 0 17px 0 19px; }
.bm { display: flex; align-items: center; gap: 8px; margin-right: 20px; flex: none; }
.more { margin-left: 13px; }
.msep { margin-left: 22px; }
.folder { margin: 0 9px 0 19px; }

.page { flex: 1; background: #f9fafb; display: flex; flex-direction: column; position: relative; font-size: 19px; }
.agents { display: flex; align-items: center; padding: 30px 30px 0; }
.btn { border-radius: 5px; display: flex; align-items: center; color: #fff; height: 50px; padding: 2px 20px 0; line-height: 30px; font-size: 19px; }
.outline { height: 52px; background: #fff; border: 1px solid #e5e7eb; color: #000; margin-right: 15px; }
.green { height: 52px; background: #16a34a; }
.purple { margin-left: auto; background: #9333ea; padding: 2px 20px 0 24px; gap: 9px; }
.blue { background: #2563eb; width: 130px; margin-top: 27px; }
.card { width: 720px; height: 319px; margin: 50px auto 0; padding: 30px; border-radius: 15px; background: #fff; box-shadow: 0 12.5px 18.75px -3.75px rgba(0, 0, 0, .1), 0 5px 7.5px -5px rgba(0, 0, 0, .1); }
h2 { margin: 0 0 20px; height: 40px; display: flex; align-items: center; font-size: 28.5px; font-weight: 700; line-height: 40px; color: #000; padding: 2px 0 0 6px; gap: 14px; }
textarea { display: block; width: 660px; height: 122px; border: 1px solid #e5e7eb; border-radius: 10px; padding: 16px 15px 14px; font: inherit; line-height: 30px; background: #fff; resize: both; outline: none; letter-spacing: -.05px; }
textarea::placeholder { color: #9ca3af; opacity: 1; }
.netmeter { position: absolute; left: 2px; bottom: 0; width: 275px; height: 35px; border: 1.5px solid #8cc97c; border-radius: 8px; background: linear-gradient(#e2f5d2, #fbfff8 50%, #e2f5d2); box-shadow: inset 0 0 9px #c5e9b1; color: #2b6430; display: flex; align-items: center; padding-left: 6px; font-size: 15.6px; overflow: hidden; }
.netmeter .dn { margin-left: 33px; position: relative; z-index: 1; }
.mascot { position: absolute; right: 0; top: 0; }

.taskbar { height: 60px; flex: none; display: flex; align-items: center; padding-bottom: 1px; background: linear-gradient(90deg, #f6dad4, #f5dad5 40%, #efd9d6 62%, #e9d4d5); border-top: 1px solid #e2c8c3; color: #1b1716; }
.weather { width: 415px; display: flex; align-items: center; padding-left: 25px; gap: 9px; }
.wtext { display: flex; flex-direction: column; align-items: flex-start; font-size: 14.2px; line-height: 20px; }
.cond { color: #66524e; }
.search { margin-left: 17.5px; width: 273px; height: 39px; border-radius: 20px; background: #fcf3f1; border: 1px solid #e8d0cb; border-bottom-color: #c9aea9; display: flex; align-items: center; padding: 0 1px 0 13px; font-size: 16.6px; color: #5c5350; }
.search span { margin-left: 11.5px; }
.meerkats { margin-left: auto; margin-right: 1px; }
.apps { display: flex; margin-left: 3.5px; }
.slot { width: 55px; height: 58px; display: flex; align-items: center; justify-content: center; position: relative; }
.appicon { width: 30px; height: 30px; position: relative; }
.slot.active::before { content: ''; position: absolute; left: 3px; top: 5px; width: 45px; height: 48px; border-radius: 5px; background: #f8ebe8; border: 1px solid #ead6d2; box-shadow: 3px 0 0 -1px #f6e6e2, 4px 0 0 -1px #e0c9c5; }
.slot.active::after, .slot.running::after { content: ''; position: absolute; bottom: 5px; left: 23.5px; width: 8px; height: 4px; border-radius: 2px; background: #8a7b78; }
.slot.active::after { left: 17.5px; width: 20px; background: #0a78d4; }
.tray { margin-left: auto; margin-right: 24px; display: flex; align-items: center; font-size: 14.6px; line-height: 20px; }
.sync { margin-left: 11px; }
.kbd { margin-left: 14px; }
.lang { margin-left: 22px; width: 32px; display: flex; flex-direction: column; align-items: center; }
.wifi { margin-left: 21px; }
.vol { margin-left: 9px; }
.bat { margin-left: 10px; }
.clock { margin-left: 18px; width: 79px; display: flex; flex-direction: column; align-items: flex-end; padding-bottom: 1px; }
.moon { margin-left: 12px; }
</style>
